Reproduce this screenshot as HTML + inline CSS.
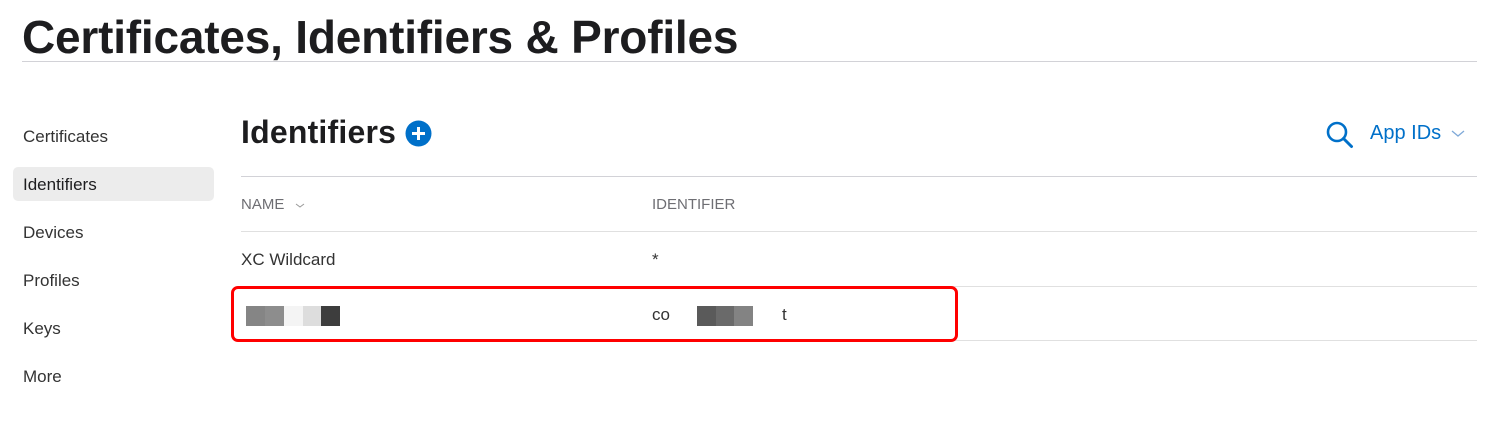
<!DOCTYPE html>
<html><head><style>
body{margin:0;width:1500px;height:444px;background:#fff;font-family:"Liberation Sans",sans-serif;position:relative;overflow:hidden;color:#1d1d1f}
.a{position:absolute}
</style></head><body>
<div class="a" style="left:22px;top:10px;font-size:46px;font-weight:bold;letter-spacing:-0.2px">Certificates, Identifiers &amp; Profiles</div>
<div class="a" style="left:22px;top:61px;width:1455px;height:1px;background:#d2d2d7"></div>
<div class="a" style="left:23px;top:127px;font-size:17px;color:#333">Certificates</div>
<div class="a" style="left:13px;top:167px;width:201px;height:34px;background:#ececec;border-radius:5px"></div>
<div class="a" style="left:23px;top:175px;font-size:17px;color:#1d1d1f">Identifiers</div>
<div class="a" style="left:23px;top:223px;font-size:17px;color:#333">Devices</div>
<div class="a" style="left:23px;top:271px;font-size:17px;color:#333">Profiles</div>
<div class="a" style="left:23px;top:319px;font-size:17px;color:#333">Keys</div>
<div class="a" style="left:23px;top:367px;font-size:17px;color:#333">More</div>
<div class="a" style="left:241px;top:114px;font-size:32px;font-weight:bold;letter-spacing:0.2px">Identifiers</div>
<svg class="a" style="left:405px;top:120px" width="27" height="27"><circle cx="13.5" cy="13.5" r="13" fill="#0070c9"/><path d="M13.5 7v13M7 13.5h13" stroke="#fff" stroke-width="3"/></svg>
<svg class="a" style="left:1325px;top:120px" width="30" height="30"><circle cx="12" cy="12" r="9" fill="none" stroke="#0070c9" stroke-width="2.6"/><path d="M18.5 18.5l8 8" stroke="#0070c9" stroke-width="3" stroke-linecap="round"/></svg>
<div class="a" style="left:1370px;top:122px;font-size:20px;color:#0070c9">App IDs</div>
<svg class="a" style="left:1451px;top:130px" width="14" height="8"><path d="M1 1l6 5 6-5" fill="none" stroke="#7fa9d8" stroke-width="1.3"/></svg>
<div class="a" style="left:241px;top:176px;width:1236px;height:1px;background:#d2d2d7"></div>
<div class="a" style="left:241px;top:196px;font-size:15px;color:#6e6e73">NAME</div>
<svg class="a" style="left:295px;top:203px" width="10" height="6"><path d="M1 1l4 3 4-3" fill="none" stroke="#999" stroke-width="1"/></svg>
<div class="a" style="left:652px;top:196px;font-size:15px;color:#6e6e73">IDENTIFIER</div>
<div class="a" style="left:241px;top:231px;width:1236px;height:1px;background:#e0e0e0"></div>
<div class="a" style="left:241px;top:250px;font-size:17px;color:#333">XC Wildcard</div>
<div class="a" style="left:652px;top:250px;font-size:17px;color:#333">*</div>
<div class="a" style="left:241px;top:286px;width:1236px;height:1px;background:#e0e0e0"></div>
<div class="a" style="left:241px;top:340px;width:1236px;height:1px;background:#e0e0e0"></div>
<div class="a" style="left:231px;top:286px;width:727px;height:56px;border:3px solid #f00;border-radius:7px;box-sizing:border-box"></div>
<div class="a" style="left:246px;top:306px;width:19px;height:20px;background:#858585"></div>
<div class="a" style="left:265px;top:306px;width:19px;height:20px;background:#8d8d8d"></div>
<div class="a" style="left:284px;top:306px;width:19px;height:20px;background:#f4f4f4"></div>
<div class="a" style="left:303px;top:306px;width:19px;height:20px;background:#ddd"></div>
<div class="a" style="left:321px;top:306px;width:19px;height:20px;background:#3d3d3d"></div>
<div class="a" style="left:652px;top:305px;font-size:17px;color:#333">co</div>
<div class="a" style="left:697px;top:306px;width:19px;height:20px;background:#5a5a5a"></div>
<div class="a" style="left:716px;top:306px;width:18px;height:20px;background:#6a6a6a"></div>
<div class="a" style="left:734px;top:306px;width:19px;height:20px;background:#838383"></div>
<div class="a" style="left:782px;top:305px;font-size:17px;color:#333">t</div>
</body></html>
